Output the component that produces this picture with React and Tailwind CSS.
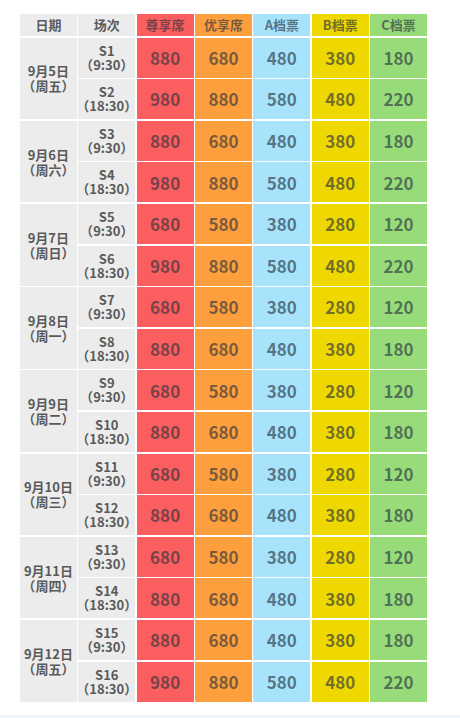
const days = [
  { date: '9月5日', week: '周五', shows: [['S1', '9:30', [880, 680, 480, 380, 180]], ['S2', '18:30', [980, 880, 580, 480, 220]]] },
  { date: '9月6日', week: '周六', shows: [['S3', '9:30', [880, 680, 480, 380, 180]], ['S4', '18:30', [980, 880, 580, 480, 220]]] },
  { date: '9月7日', week: '周日', shows: [['S5', '9:30', [680, 580, 380, 280, 120]], ['S6', '18:30', [980, 880, 580, 480, 220]]] },
  { date: '9月8日', week: '周一', shows: [['S7', '9:30', [680, 580, 380, 280, 120]], ['S8', '18:30', [880, 680, 480, 380, 180]]] },
  { date: '9月9日', week: '周二', shows: [['S9', '9:30', [680, 580, 380, 280, 120]], ['S10', '18:30', [880, 680, 480, 380, 180]]] },
  { date: '9月10日', week: '周三', shows: [['S11', '9:30', [680, 580, 380, 280, 120]], ['S12', '18:30', [880, 680, 480, 380, 180]]] },
  { date: '9月11日', week: '周四', shows: [['S13', '9:30', [680, 580, 380, 280, 120]], ['S14', '18:30', [880, 680, 480, 380, 180]]] },
  { date: '9月12日', week: '周五', shows: [['S15', '9:30', [880, 680, 480, 380, 180]], ['S16', '18:30', [980, 880, 580, 480, 220]]] },
]

const tiers = [
  { label: '尊享席', bg: 'bg-[#fb5e5e]' },
  { label: '优享席', bg: 'bg-[#fe9f3e]' },
  { label: 'A档票', bg: 'bg-[#a7e4fb]' },
  { label: 'B档票', bg: 'bg-[#efd700]' },
  { label: 'C档票', bg: 'bg-[#98dc7a]' },
]

const font = { fontFamily: '"Noto Sans CJK SC", "Noto Sans", sans-serif' }

export default function App() {
  return (
    <div className="w-[460px] h-[718px] bg-white flex flex-col" style={font}>
      <div className="flex-1 pt-[14px] pl-[20px]">
        <div className="grid grid-cols-7 w-[407px] gap-[1.6px] grid-rows-[22px] auto-rows-[40px]">
          <div className="bg-[#ececec] flex items-center justify-center text-[13px] font-bold text-[#5a5a5a]">日期</div>
          <div className="bg-[#ececec] flex items-center justify-center text-[13px] font-bold text-[#5a5a5a]">场次</div>
          {tiers.map(t => (
            <div key={t.label} className={`${t.bg} flex items-center justify-center text-[13px] font-bold text-[#28323f]/65`}>
              {t.label}
            </div>
          ))}

          {days.map(d => (
            <Day key={d.date} day={d} />
          ))}
        </div>
      </div>
      <div className="h-[3px] bg-[#eef5fa]" />
    </div>
  )
}

function Day({ day }) {
  return (
    <>
      <div className="row-span-2 bg-[#ececec] flex items-center justify-center text-center text-[13px] leading-[15px] font-bold text-[#5a5a5a]">
        <div>
          {day.date}
          <br />
          （{day.week}）
        </div>
      </div>
      {day.shows.map(([s, time, prices]) => (
        <Show key={s} s={s} time={time} prices={prices} />
      ))}
    </>
  )
}

function Show({ s, time, prices }) {
  return (
    <>
      <div className="col-start-2 bg-[#ececec] flex items-center justify-center text-center text-[13px] leading-[14px] font-bold text-[#5a5a5a]">
        <div>
          {s}
          <br />
          （{time}）
        </div>
      </div>
      {prices.map((p, i) => (
        <div key={i} className={`${tiers[i].bg} flex items-center justify-center text-[17px] font-bold text-[#28323f]/65`}>
          {p}
        </div>
      ))}
    </>
  )
}
